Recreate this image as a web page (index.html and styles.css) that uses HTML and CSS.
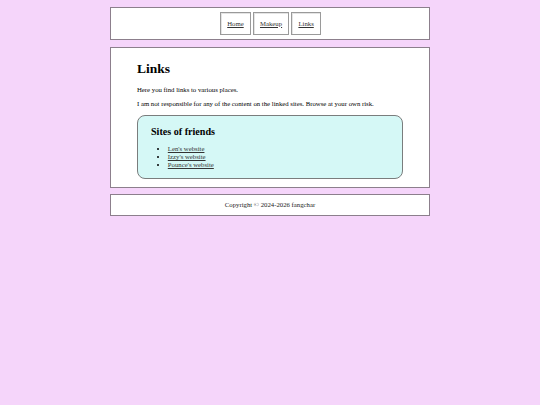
FILE: index.html
```html
<!DOCTYPE html>
<html>
<head>
<meta charset="utf-8">
<link rel="stylesheet" href="styles.css">
</head>
<body>
<div class="page">
  <header class="box nav-box">
    <nav class="nav">
      <a class="nav-btn" href="#">Home</a>
      <a class="nav-btn" href="#">Makeup</a>
      <a class="nav-btn" href="#">Links</a>
    </nav>
  </header>
  <main class="box main-box">
    <h1 class="title">Links</h1>
    <p class="text">Here you find links to various places.</p>
    <p class="text">I am not responsible for any of the content on the linked sites. Browse at your own risk.</p>
    <section class="friends">
      <h2 class="friends-title">Sites of friends</h2>
      <ul class="friends-list">
        <li><a href="#">Len's website</a></li>
        <li><a href="#">Izzy's website</a></li>
        <li><a href="#">Pounce's website</a></li>
      </ul>
    </section>
  </main>
  <footer class="box footer">Copyright © 2024-2026 fangchar</footer>
</div>
</body>
</html>
```
FILE: styles.css
```css
html, body {
  margin: 0;
  padding: 0;
}
body {
  background: #f5d5fa;
  font-family: "Liberation Serif", "Times New Roman", serif;
  color: #000;
  font-size: 6.75px;
  line-height: 7.8px;
}
.page {
  width: 320px;
  margin: 0 auto;
  padding-top: 7px;
  display: flex;
  flex-direction: column;
}
.box {
  background: #fff;
  border: 1px solid #8c7f8c;
  box-sizing: border-box;
}
.nav-box {
  height: 33px;
  display: flex;
  align-items: center;
  justify-content: center;
}
.nav {
  display: flex;
  gap: 1.7px;
  margin-left: 1px;
}
.nav-btn {
  display: flex;
  align-items: center;
  justify-content: center;
  height: 23px;
  box-sizing: border-box;
  padding: 0 6.3px;
  border: 1px solid #9a9a9a;
  box-shadow: inset 1px 1px 0 #e4e4e4;
  color: #333;
}
.main-box {
  margin-top: 7px;
  height: 141px;
  padding: 4px 26px 0;
}
.title {
  font-size: 13.5px;
  line-height: 15.5px;
  font-weight: bold;
  margin: 9px 0;
}
.text {
  margin: 0 0 6.75px;
}
.friends {
  margin-top: 1px;
  background: #d5f8f6;
  border: 1px solid #7a7d7d;
  border-radius: 8px;
  height: 64px;
  box-sizing: border-box;
  padding: 2px 13px 0;
}
.friends-title {
  font-size: 10.1px;
  line-height: 11.6px;
  font-weight: bold;
  margin: 8.4px 0 7.6px;
}
.friends-list {
  margin: 0;
  padding-left: 16.8px;
}
.friends-list a {
  color: #333;
}
.footer {
  margin-top: 6px;
  height: 22px;
  display: flex;
  align-items: center;
  justify-content: center;
  color: #222;
}
```
